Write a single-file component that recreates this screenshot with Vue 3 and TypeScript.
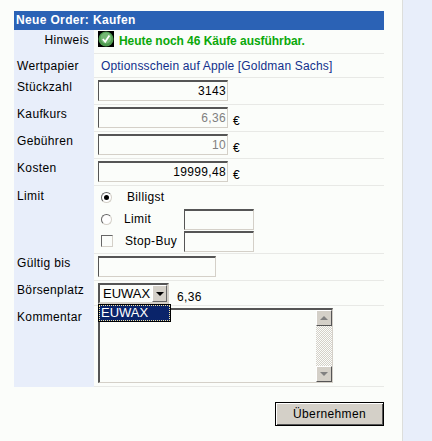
<template>
  <div class="page">
    <main class="content">
      <h1 class="title">Neue Order: Kaufen</h1>

      <div class="row row--hint">
        <div class="label label--right">Hinweis</div>
        <div class="value hint">
          <svg class="ok-icon" width="16" height="16" viewBox="0 0 16 16">
            <rect width="16" height="16" fill="#000" />
            <circle cx="8" cy="8" r="7.5" fill="#4f9a50" />
            <circle cx="8" cy="7" r="5.5" fill="#74b874" />
            <path d="M4.8 8l2.4 2.8L11.4 4.6" fill="none" stroke="#fff" stroke-width="1.8" />
          </svg>
          <strong>Heute noch 46 Käufe ausführbar.</strong>
        </div>
      </div>

      <div class="row row--paper">
        <div class="label">Wertpapier</div>
        <div class="value paper">Optionsschein auf Apple [Goldman Sachs]</div>
      </div>

      <div v-for="f in amountFields" :key="f.label" class="row row--field">
        <div class="label label--top">{{ f.label }}</div>
        <div class="value">
          <input class="box box--num" :class="{ 'box--muted': f.muted }" :value="f.value" readonly />
          <span v-if="f.euro" class="euro">€</span>
        </div>
      </div>

      <div class="row row--limit">
        <div class="label label--limit">Limit</div>
        <div class="value limit">
          <div class="limit__line">
            <span class="radio radio--on"></span>
            <span class="limit__billigst">Billigst</span>
          </div>
          <div class="limit__line">
            <span class="radio"></span>
            <span class="limit__text">Limit</span>
            <input class="box box--small" />
          </div>
          <div class="limit__line">
            <span class="check"></span>
            <span class="limit__text">Stop-Buy</span>
            <input class="box box--small" />
          </div>
        </div>
      </div>

      <div class="row row--field">
        <div class="label label--top">Gültig bis</div>
        <div class="value">
          <input class="box box--date" />
        </div>
      </div>

      <div class="row row--market">
        <div class="label label--top">Börsenplatz</div>
        <div class="value">
          <div class="select">
            <span class="select__text">EUWAX</span>
            <span class="select__btn"><i class="arrow-down"></i></span>
          </div>
          <span class="quote">6,36</span>
          <div class="popup">EUWAX</div>
        </div>
      </div>

      <div class="row row--comment">
        <div class="label label--comment">Kommentar</div>
        <div class="value value--comment">
          <div class="memo">
            <div class="memo__text"></div>
            <div class="scroll">
              <span class="scroll__btn"><i class="tri tri--up"></i></span>
              <span class="scroll__track"></span>
              <span class="scroll__btn"><i class="tri tri--down"></i></span>
            </div>
          </div>
        </div>
      </div>

      <div class="actions">
        <button class="submit" type="button">Übernehmen</button>
      </div>
    </main>
    <aside class="side"></aside>
  </div>
</template>

<script setup lang="ts">
interface AmountField {
  label: string
  value: string
  euro: boolean
  muted: boolean
}

const amountFields: AmountField[] = [
  { label: 'Stückzahl', value: '3143', euro: false, muted: false },
  { label: 'Kaufkurs', value: '6,36', euro: true, muted: true },
  { label: 'Gebühren', value: '10', euro: true, muted: true },
  { label: 'Kosten', value: '19999,48', euro: true, muted: false },
]
</script>

<style>
body {
  margin: 0;
}
</style>

<style scoped>
.page {
  display: flex;
  width: 432px;
  height: 441px;
  overflow: hidden;
  background: #fbfdfa;
  font-family: "Liberation Sans", Arial, sans-serif;
  font-size: 12px;
  letter-spacing: 0.35px;
  color: #000;
}

.content {
  width: 402px;
  box-sizing: border-box;
  padding: 11px 18px 0 14px;
}

.side {
  flex: 1;
  background: #e8eefa;
  border-left: 1px solid #dddedb;
}

.title {
  margin: 0;
  height: 19px;
  padding-left: 2px;
  background: #2b62b5;
  color: #fff;
  font-size: 12px;
  font-weight: bold;
  line-height: 19px;
}

.row {
  display: flex;
}

.row--hint {
  height: 24px;
}

.row--paper {
  height: 24px;
}

.row--field {
  height: 27px;
}

.row--limit {
  height: 68px;
}

.row--market {
  height: 25px;
}

.row--comment {
  height: 81px;
}

.label {
  width: 80px;
  flex: none;
  box-sizing: border-box;
  padding: 5px 0 0 3px;
  background: #e8eefa;
}

.label--right {
  padding: 3px 5px 0 0;
  text-align: right;
}

.label--top {
  padding-top: 2px;
}

.label--limit {
  padding-top: 3px;
}

.label--comment {
  padding-top: 4px;
}

.value {
  position: relative;
  flex: 1;
  display: flex;
  align-items: flex-start;
  box-sizing: border-box;
  padding: 2px 0 0 4px;
  border-bottom: 1px solid #e8e9e6;
}

.hint {
  padding-top: 1px;
  color: #0aa80a;
}

.ok-icon {
  flex: none;
  margin-right: 5px;
}

.hint strong {
  margin-top: 3px;
  font-size: 12px;
  letter-spacing: -0.05px;
}

.paper {
  padding: 5px 0 0 7px;
  letter-spacing: 0.17px;
  color: #12308c;
}

.box {
  box-sizing: border-box;
  height: 21px;
  margin: 0;
  padding: 0 1px 0 3px;
  border-style: solid;
  border-width: 2px 1px 1px 1px;
  border-color: #555 #d4d0c8 #d4d0c8 #555;
  border-radius: 0;
  outline: none;
  background: #fbfdfa;
  font: inherit;
  letter-spacing: inherit;
  color: #000;
}

.box--num {
  width: 130px;
  text-align: right;
}

.box--muted {
  color: #808080;
}

.box--small {
  width: 70px;
  margin-left: auto;
}

.box--date {
  width: 118px;
}

.euro {
  margin: 7px 0 0 5px;
}

.limit {
  display: block;
  padding: 0;
}

.limit__line {
  display: flex;
  align-items: center;
  box-sizing: border-box;
  height: 22px;
  width: 160px;
  padding-left: 7px;
}

.limit__billigst {
  margin-left: 15px;
}

.limit__text {
  margin-left: 12px;
}

.radio {
  position: relative;
  flex: none;
  box-sizing: border-box;
  width: 11px;
  height: 11px;
  border: 1px solid;
  border-color: #666 #d4d0c8 #d4d0c8 #666;
  border-radius: 50%;
  background: #fff;
}

.radio--on::after {
  content: "";
  position: absolute;
  inset: 2px;
  border-radius: 50%;
  background: #000;
}

.check {
  flex: none;
  box-sizing: border-box;
  width: 12px;
  height: 12px;
  border: 1px solid;
  border-color: #666 #d4d0c8 #d4d0c8 #666;
  background: #fbfdfa;
}

.select {
  display: flex;
  box-sizing: border-box;
  width: 71px;
  height: 21px;
  border: 2px solid;
  border-color: #555 #d4d0c8 #d4d0c8 #555;
  background: #fbfdfa;
  font-size: 13px;
  letter-spacing: 0;
}

.select__text {
  flex: 1;
  padding-left: 3px;
  line-height: 18px;
}

.select__btn {
  display: flex;
  align-items: center;
  justify-content: center;
  width: 15px;
  background: #d4d0c8;
  border-style: solid;
  border-width: 1px;
  border-color: #fff #666 #666 #fff;
  box-sizing: border-box;
}

.arrow-down {
  border-left: 4px solid transparent;
  border-right: 4px solid transparent;
  border-top: 4px solid #000;
}

.quote {
  margin: 7px 0 0 8px;
}

.popup {
  position: absolute;
  z-index: 2;
  left: 4px;
  top: 23px;
  box-sizing: border-box;
  width: 73px;
  height: 18px;
  padding-left: 2px;
  border: 1px solid #000;
  outline: 1px dotted #f5e6a0;
  outline-offset: -2px;
  background: #0a246a;
  color: #fff;
  font-size: 13px;
  letter-spacing: 0;
  line-height: 15px;
}

.value--comment {
  padding-top: 2px;
}

.memo {
  display: flex;
  box-sizing: border-box;
  width: 235px;
  height: 75px;
  border-style: solid;
  border-width: 2px 1px 1px 2px;
  border-color: #555 #d4d0c8 #d4d0c8 #555;
  background: #fbfdfa;
}

.memo__text {
  flex: 1;
}

.scroll {
  display: flex;
  flex-direction: column;
  width: 16px;
}

.scroll__btn {
  display: flex;
  align-items: center;
  justify-content: center;
  flex: none;
  box-sizing: border-box;
  height: 16px;
  background: #d4d0c8;
  border-style: solid;
  border-width: 1px;
  border-color: #fff #555 #555 #fff;
}

.scroll__track {
  flex: 1;
  background: repeating-conic-gradient(#d4d0c8 0 25%, #fbfdfa 0 50%) 0 0 / 2px 2px;
}

.tri {
  border-left: 4px solid transparent;
  border-right: 4px solid transparent;
}

.tri--up {
  border-bottom: 4px solid #808080;
}

.tri--down {
  border-top: 4px solid #808080;
}

.actions {
  display: flex;
  justify-content: flex-end;
  padding-top: 15px;
}

.submit {
  box-sizing: border-box;
  width: 109px;
  height: 24px;
  padding: 0;
  border: 1px solid #000;
  box-shadow: inset 1px 1px 0 #fff, inset -1px -1px 0 #555;
  background: #d4d0c8;
  font: inherit;
  letter-spacing: 0.35px;
  color: #000;
}
</style>
